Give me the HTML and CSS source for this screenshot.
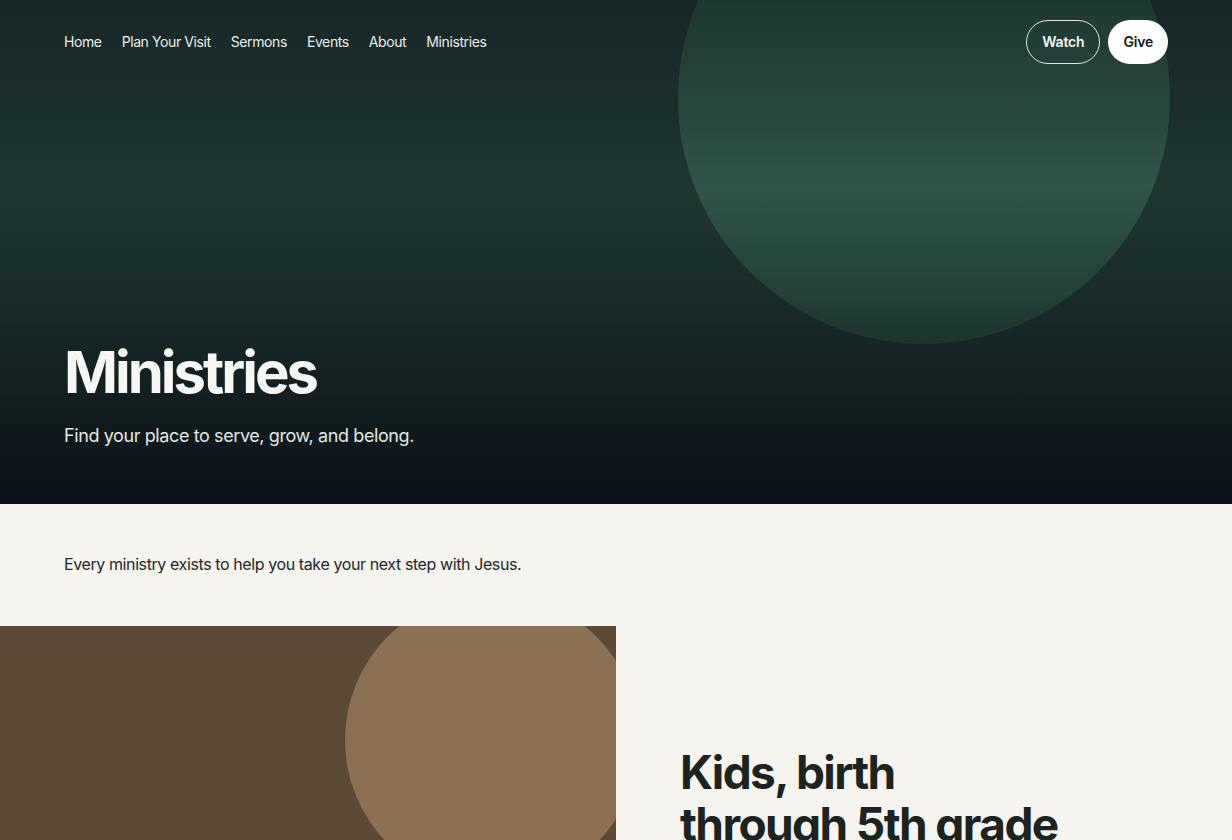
FILE: index.html
```html
<!DOCTYPE html>
<html lang="en">
<head>
<meta charset="utf-8">
<title>Ministries</title>
<link rel="stylesheet" href="styles.css">
</head>
<body>
<header class="hero">
  <div class="hero-circle"></div>
  <div class="hero-shade"></div>
  <nav class="topbar">
    <ul class="nav-links">
      <li><a href="#">Home</a></li>
      <li><a href="#">Plan Your Visit</a></li>
      <li><a href="#">Sermons</a></li>
      <li><a href="#">Events</a></li>
      <li><a href="#">About</a></li>
      <li><a href="#">Ministries</a></li>
    </ul>
    <div class="nav-actions">
      <a href="#" class="btn btn-outline">Watch</a>
      <a href="#" class="btn btn-solid">Give</a>
    </div>
  </nav>
  <div class="hero-text">
    <h1>Ministries</h1>
    <p>Find your place to serve, grow, and belong.</p>
  </div>
</header>
<main>
  <section class="intro">
    <p>Every ministry exists to help you take your next step with Jesus.</p>
  </section>
  <section class="ministry">
    <div class="ministry-media">
      <div class="media-circle"></div>
    </div>
    <div class="ministry-body">
      <h2>Kids, birth<br>through 5th grade</h2>
    </div>
  </section>
</main>
</body>
</html>
```
FILE: styles.css
```css
* { box-sizing: border-box; }
html, body { margin: 0; padding: 0; }
body {
  background: #f5f4ee;
  font-family: "Inter", "Liberation Sans", sans-serif;
  color: #1c2320;
  overflow: hidden;
}
a { color: inherit; text-decoration: none; }

.hero {
  position: relative;
  height: 504px;
  overflow: hidden;
  background: #1f3733;
  display: flex;
  flex-direction: column;
}
.hero-circle {
  position: absolute;
  width: 492px;
  height: 492px;
  border-radius: 50%;
  left: 678px;
  top: -148px;
  background: #2f5548;
}
.hero-shade {
  position: absolute;
  inset: 0;
  background: linear-gradient(180deg,
    rgba(13,20,24,0.45) 0%,
    rgba(13,20,24,0.18) 25%,
    rgba(13,20,24,0) 37%,
    rgba(13,20,24,0.35) 60%,
    rgba(13,20,24,0.75) 80%,
    rgba(12,18,26,1) 100%);
}
.topbar {
  position: relative;
  z-index: 2;
  display: flex;
  align-items: center;
  justify-content: space-between;
  padding: 20px 64px 0 64px;
  height: 63px;
}
.nav-links {
  list-style: none;
  margin: 0;
  padding: 0;
  display: flex;
  gap: 20px;
  font-size: 14px;
  letter-spacing: -0.4px;
  color: #e9eeeb;
}
.nav-actions {
  display: flex;
  gap: 8px;
}
.btn {
  display: inline-flex;
  align-items: center;
  justify-content: center;
  height: 44px;
  padding: 0 15px;
  border-radius: 22px;
  font-size: 14px;
  font-weight: 600;
  letter-spacing: -0.2px;
}
.btn-outline {
  border: 1px solid #dfe6e2;
  color: #f2f5f3;
}
.btn-solid {
  background: #ffffff;
  color: #141a18;
}
.hero-text {
  position: relative;
  z-index: 2;
  margin-top: auto;
  padding: 0 64px 58px 64px;
}
.hero-text h1 {
  margin: 0;
  font-size: 58px;
  line-height: 66px;
  font-weight: 700;
  letter-spacing: -3px;
  color: #f6f6f2;
}
.hero-text p {
  margin: 20px 0 0 0;
  font-size: 18px;
  letter-spacing: -0.4px;
  color: #e3e7e3;
}

.intro {
  padding: 46px 64px 48px 64px;
}
.intro p {
  margin: 0;
  font-size: 16px;
  line-height: 28px;
  letter-spacing: -0.4px;
  color: #23272a;
}

.ministry {
  display: grid;
  grid-template-columns: 616px 1fr;
}
.ministry-media {
  position: relative;
  height: 420px;
  overflow: hidden;
  background: #5c4a37;
}
.media-circle {
  position: absolute;
  width: 294px;
  height: 294px;
  border-radius: 50%;
  left: 345px;
  top: -33px;
  background: #8b7052;
}
.ministry-body {
  padding: 120px 64px 0 64px;
}
.ministry-body h2 {
  margin: 0;
  font-size: 46px;
  line-height: 52px;
  font-weight: 700;
  letter-spacing: -1.6px;
  color: #1b2421;
}
```
